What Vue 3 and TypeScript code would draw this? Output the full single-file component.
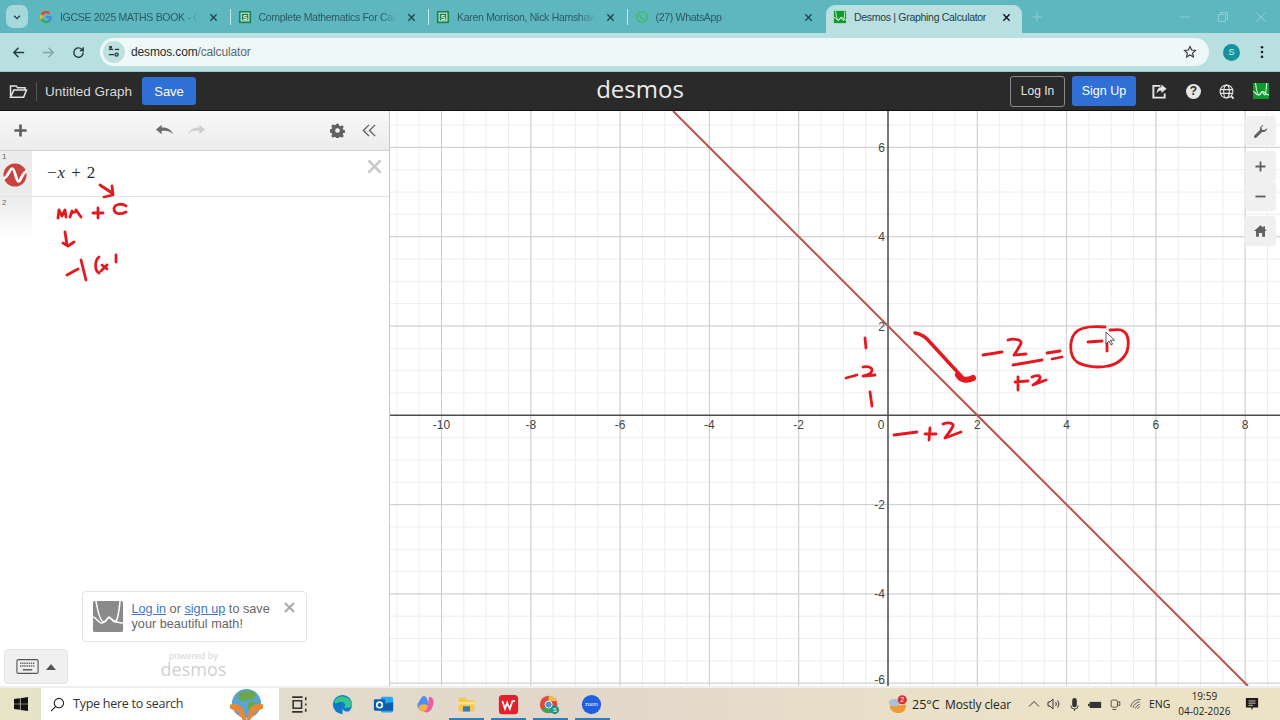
<template>
  <div class="screen">
    <div class="tabstrip">
      <button class="tabs-menu">
        <svg viewBox="0 0 12 12" width="10" height="10"><path d="M2.500 4.500 6 8l3.500-3.500" class="ico-line" /></svg>
      </button>
      <div v-for="tab in tabs" :key="tab.title" class="tab">
        <svg class="favicon" viewBox="0 0 16 16">
          <template v-if="tab.icon === 'google'">
            <path d="M14.500 8.200c0-.5 0-1-.1-1.400H8v2.700h3.700a3.200 3.200 0 0 1-1.400 2.100v1.700h2.200c1.300-1.200 2-3 2-5.100z" fill="#4285f4" />
            <path d="M8 15c1.900 0 3.400-.6 4.500-1.700l-2.200-1.700c-.6.4-1.400.7-2.300.7-1.800 0-3.300-1.200-3.800-2.800H1.900V11.200A7 7 0 0 0 8 15z" fill="#34a853" />
            <path d="M4.200 9.500a4.200 4.200 0 0 1 0-2.900V4.800H1.900a7 7 0 0 0 0 6.400z" fill="#fbbc05" />
            <path d="M8 3.800c1 0 1.900.4 2.600 1l2-2A7 7 0 0 0 1.900 4.800l2.300 1.800C4.700 5 6.200 3.800 8 3.800z" fill="#ea4335" />
          </template>
          <template v-else-if="tab.icon === 'sheet'">
            <rect x="1" y="1" width="14" height="14" rx="1" fill="#1b8453" />
            <rect x="3" y="3" width="10" height="10" fill="#d9efe3" />
            <rect x="4.200" y="4.200" width="7.600" height="7.600" fill="#1b8453" />
            <text x="8" y="11" font-size="8" font-weight="700" fill="#e8f6ee" text-anchor="middle" font-family="Liberation Sans">S</text>
          </template>
          <template v-else-if="tab.icon === 'whatsapp'">
            <circle cx="8" cy="8" r="6" fill="none" stroke="#3bbf63" stroke-width="1.800" />
            <path d="M5.500 5.500c0 3 2 5 5 5" fill="none" stroke="#3bbf63" stroke-width="1.600" />
          </template>
        </svg>
        <span class="tab-title">{{ tab.title }}</span>
        <svg class="tab-close" viewBox="0 0 10 10"><path d="M1.500 1.500l7 7m0-7l-7 7" /></svg>
      </div>
      <div class="tab tab--active">
        <svg class="favicon" viewBox="0 0 16 16">
          <rect x="1" y="1" width="14" height="14" fill="#0f9a2e" />
          <path d="M3 1.500c.8 7 2.300 10.500 3.300 10.500S8 8.500 9 8.500s1.500 3.500 3 3.500c.8 0 1-6 1.500-10.500M1 8.500c2 0 3 3 5 3s2-3 4-3 2 3 5 3" fill="none" stroke="#e9fbe8" stroke-width="1" />
        </svg>
        <span class="tab-title">Desmos | Graphing Calculator</span>
        <svg class="tab-close tab-close--dark" viewBox="0 0 10 10"><path d="M1.500 1.500l7 7m0-7l-7 7" /></svg>
      </div>
      <svg class="new-tab" viewBox="0 0 10 10"><path d="M5 .5v9M.5 5h9" /></svg>
      <div class="window-btns">
        <svg viewBox="0 0 10 10"><path d="M.5 5h9" /></svg>
        <svg viewBox="0 0 10 10"><path d="M.5 2.500h7v7h-7zM2.500 2.500V.5h7v7h-2" /></svg>
        <svg viewBox="0 0 10 10"><path d="M.5.5l9 9m0-9l-9 9" /></svg>
      </div>
    </div>

    <div class="toolbar">
      <svg class="nav" viewBox="0 0 16 16"><path d="M14 8H3m5-5L3 8l5 5" stroke="#25383a" /></svg>
      <svg class="nav" viewBox="0 0 16 16"><path d="M2 8h11M8 3l5 5-5 5" stroke="#7fa5a7" /></svg>
      <svg class="nav" viewBox="0 0 16 16"><path d="M13 8a5 5 0 1 1-1.500-3.500L13 6V2.500M13 6H9.500" stroke="#25383a" /></svg>
      <div class="omnibox">
        <span class="site-chip">
          <svg viewBox="0 0 14 14" width="12" height="12"><path d="M1 4h5M1 10h6" class="ico-line" /><circle cx="3" cy="1.500" r="1" class="ico-line" /><circle cx="10" cy="10" r="1.800" class="ico-line" /><path d="M8 4h5" class="ico-line" /></svg>
        </span>
        <span class="url">desmos.com<span class="url-path">/calculator</span></span>
        <svg class="star" viewBox="0 0 16 16"><path d="M8 1.800l1.900 4 4.300.5-3.200 3 .9 4.300L8 11.400l-3.900 2.200.9-4.300-3.200-3 4.300-.5z" /></svg>
      </div>
      <span class="avatar">S</span>
      <svg class="kebab" viewBox="0 0 4 16"><circle cx="2" cy="2.500" r="1.500" /><circle cx="2" cy="8" r="1.500" /><circle cx="2" cy="13.500" r="1.500" /></svg>
    </div>

    <header class="dcg-header">
      <div class="header-left">
        <svg class="folder" viewBox="0 0 20 16"><path d="M1.500 14V2h6l1.500 2h8v2.500H5L1.500 14h14l3-7.500H5" /></svg>
        <span class="header-sep"></span>
        <span class="graph-title">Untitled Graph</span>
        <button class="btn-blue btn-save">Save</button>
      </div>
      <div class="brand">desmos</div>
      <div class="header-right">
        <button class="btn-login">Log In</button>
        <button class="btn-blue btn-signup">Sign Up</button>
        <svg class="head-ico" viewBox="0 0 18 18"><path d="M10 3H2.500v12.500h12V11" fill="none" stroke="#e6e6e6" stroke-width="2" /><path d="M11 1.500l5.500 4.500-5.500 4.500V8C8.500 8 7 9 6 11.500 6 7 8 4.500 11 4.200z" fill="#e6e6e6" /></svg>
        <span class="help">?</span>
        <svg class="head-ico" viewBox="0 0 18 18" fill="none" stroke="#e6e6e6" stroke-width="1.200"><circle cx="9" cy="9" r="6.800" /><ellipse cx="9" cy="9" rx="3" ry="6.800" /><path d="M2.500 7h13M2.500 11h13" /><path d="M14 14l2.500 2.500" stroke-width="2" /></svg>
        <svg class="head-logo" viewBox="0 0 16 16">
          <rect x="0" y="0" width="16" height="16" fill="#0f9a2e" />
          <path d="M2.500 0c.8 7 2.300 12 3.800 12S8 8.500 9 8.500s1.500 3.500 3 3.500c.8 0 1.200-6 1.700-12M0 8.500c2 0 3 3.500 5.500 3.500S8 8.500 10 8.500s2.500 3.500 6 3.500" fill="none" stroke="#e9fbe8" stroke-width="1.100" />
        </svg>
      </div>
    </header>

    <main class="calc">
      <aside class="sidebar">
        <div class="exp-toolbar">
          <svg class="bar-ico" viewBox="0 0 16 16"><path d="M8 1.500v13M1.500 8h13" stroke="#5f5f5f" stroke-width="2.800" fill="none" /></svg>
          <div class="undo-redo">
            <svg class="bar-ico" viewBox="0 0 20 14"><path d="M1 6l6-5v3c6-.5 10 2 12 7-3-3-6-4-12-3.500V11z" fill="#6d6d6d" /></svg>
            <svg class="bar-ico" viewBox="0 0 20 14"><path d="M19 6l-6-5v3C7 3.500 3 6 1 11c3-3 6-4 12-3.500V11z" fill="#cfcfcf" /></svg>
          </div>
          <div class="bar-right">
            <svg class="bar-ico" viewBox="0 0 16 16"><path d="M6.700.8h2.600l.4 2 1.400.6 1.800-1.100 1.800 1.800-1.100 1.800.6 1.400 2 .4v2.600l-2 .4-.6 1.400 1.100 1.800-1.800 1.800-1.800-1.100-1.400.6-.4 2H6.700l-.4-2-1.400-.6-1.800 1.100-1.800-1.800 1.100-1.800-.6-1.400-2-.4V6.700l2-.4.6-1.400-1.100-1.800 1.800-1.800 1.800 1.100 1.400-.6zM8 5.500a2.500 2.500 0 1 0 0 5 2.500 2.500 0 0 0 0-5z" fill="#616161" fill-rule="evenodd" /></svg>
            <svg class="bar-ico" viewBox="0 0 16 16"><path d="M7.500 2 1.500 8l6 6M14 2 8 8l6 6" fill="none" stroke="#616161" stroke-width="1.500" /></svg>
          </div>
        </div>
        <div class="exp-row">
          <div class="gutter">
            <span class="exp-num">1</span>
            <svg class="exp-icon" viewBox="0 0 26 26">
              <circle cx="13" cy="13" r="12.500" fill="#c74440" />
              <path d="M0 17C5 17 7 6 10 6s4 14 7 14c2.500 0 4-11 9-11" fill="none" stroke="#fff" stroke-width="3" />
            </svg>
          </div>
          <div class="math"><span>−</span><i>x</i><span class="op">+</span><span>2</span></div>
          <svg class="exp-del" viewBox="0 0 16 16"><path d="M1.500 1.500l13 13m0-13l-13 13" /></svg>
        </div>
        <div class="exp-row exp-row--empty">
          <div class="gutter gutter--fade"><span class="exp-num">2</span></div>
        </div>
        <div class="side-spacer"></div>
        <div class="save-card">
          <svg class="card-logo" viewBox="0 0 30 31">
            <rect width="30" height="31" rx="1.500" fill="#8a8a8a" />
            <path d="M3 0c2 12 5 21 8 21s3-5 5-5 3 5 6 5c2 0 4-9 5-21M0 16c3 0 5 6 9 6s4-5 7-5 4 5 14 5" fill="none" stroke="#fff" stroke-width="1.500" />
          </svg>
          <div class="card-text"><a>Log in</a> or <a>sign up</a> to save your beautiful math!</div>
          <svg class="card-close" viewBox="0 0 12 12"><path d="M1 1l10 10m0-10L1 11" /></svg>
        </div>
        <div class="powered">
          <span class="powered-by">powered by</span>
          <span class="powered-logo">desmos</span>
        </div>
        <button class="keypad-btn">
          <svg viewBox="0 0 24 16" width="23" height="15"><rect x=".7" y=".7" width="22.600" height="14.600" rx="1.500" fill="none" stroke="#555" stroke-width="1.200" /><path d="M4 4.500h16M4 7.500h16" stroke="#666" stroke-width="1.600" stroke-dasharray="1.500 .8" /><path d="M7 11.500h10" stroke="#555" stroke-width="1.500" /></svg>
          <span class="caret-up"></span>
        </button>
        <!-- pen marks the teacher made on top of the list -->
        <svg class="ink ink--side" viewBox="0 0 389 575">
          <g transform="translate(0 -111)">
            <path d="M100 185l12 8M104 197l9-2-1-9M58 218l1-8 3 6 3-6 1 7M70 217l2-6M72 213l5-2M76 210l5 7M93 213h10M98 208v10M126 206c-4-3-12-2-12 3s6 6 12 3M65 232l2 13M63 243l5 3 6-4M67 275l11-6M81 260l5 20M99 257c-4 3-5 13 0 16M102 265l5 4M107 265l-6 6M116 255v7" />
          </g>
        </svg>
      </aside>

      <section class="graph">
        <svg class="graph-canvas" viewBox="390 111 890 575">
          <line v-for="x in minorX" :key="'mx' + x" :x1="x" y1="111" :x2="x" y2="686" class="grid-minor" />
          <line v-for="y in minorY" :key="'my' + y" x1="390" :y1="y" x2="1280" :y2="y" class="grid-minor" />
          <line v-for="t in xTicks" :key="'tx' + t.v" :x1="t.p" y1="111" :x2="t.p" y2="686" class="grid-major" />
          <line v-for="t in yTicks" :key="'ty' + t.v" x1="390" :y1="t.p" x2="1280" :y2="t.p" class="grid-major" />
          <line x1="888" y1="111" x2="888" y2="686" class="axis" />
          <line x1="390" y1="415.300" x2="1280" y2="415.300" class="axis" />
          <line x1="673" y1="111" x2="1248" y2="686" class="plot" />
          <text v-for="t in xTicks" :key="'lx' + t.v" :x="t.p" y="429" class="tick" text-anchor="middle">{{ t.v }}</text>
          <text v-for="t in yTicks" :key="'ly' + t.v" x="885" :y="Math.min(t.p + 4.500, 684)" class="tick" text-anchor="end">{{ t.v }}</text>
          <text x="881" y="429" class="tick" text-anchor="middle">0</text>
          <g class="ink">
            <path d="M915 333c5 1 9 3 12 6l35 38" stroke-width="3.400" />
            <path d="M865 338l1 10M846 378l11-3M863 367c4-1 9 0 9 3s-4 5-9 6l12-1M870 392l2 14" />
            <path d="M958 375c3 5 9 6 15 3" stroke-width="6" />
            <path d="M983 355l19-3M1008 340c6-2 14 0 13 3s-5 9-7 12l12-1M1013 365l29-5M1015 382l13-1M1018 377v13M1032 377c4-2 9-2 8 1s-5 6-7 7l13-5M1047 353l13-2M1052 359l10-2" />
            <path d="M1105 327c-12-1-25 0-30 6-6 8-6 23 2 29 8 5 22 6 31 4 11-2 19-10 20-19 1-8-1-15-7-17-3-1-8 0-11 0" />
            <path d="M1088 342l14-1M1107 343v8M894 435l23-3M925 434h11M930 428l-1 12M943 424c5-2 11-1 10 2s-6 9-8 12l16-6" />
          </g>
          <path d="M1106 332v12l3-3 2 4 1.500-.8-2-4h4z" fill="#fff" stroke="#333" stroke-width=".8" />
        </svg>
        <div class="graph-btns">
          <button class="gbtn">
            <svg viewBox="0 0 16 16" width="15" height="15"><path d="M15 4.500A4 4 0 0 1 9.800 8.400L3.700 14.500a1.500 1.500 0 0 1-2.200-2.200l6.100-6.100A4 4 0 0 1 11.500 1L9 3.500 9.500 6l2.500.5z" fill="#5f5f5f" /></svg>
          </button>
          <div class="gbtn-group">
            <button class="gbtn">
              <svg viewBox="0 0 12 12" width="11" height="11"><path d="M6 .5v11M.5 6h11" stroke="#5f5f5f" stroke-width="2" /></svg>
            </button>
            <button class="gbtn">
              <svg viewBox="0 0 12 12" width="11" height="11"><path d="M.5 6h11" stroke="#5f5f5f" stroke-width="2" /></svg>
            </button>
          </div>
          <button class="gbtn">
            <svg viewBox="0 0 16 14" width="13" height="12"><path d="M8 0 0 7h2.500v7H6V9.500h4V14h3.500V7H16l-2.500-2.200V1h-2v2z" fill="#5f5f5f" /></svg>
          </button>
        </div>
      </section>
    </main>

    <footer class="taskbar">
      <div class="start">
        <svg viewBox="0 0 16 16" width="14" height="14"><path d="M0 2.300 6.700 1.400v6.200H0zM7.500 1.300 16 0v7.600H7.500zM0 8.400h6.700v6.200L0 13.700zM7.500 8.400H16V16l-8.500-1.200z" fill="#111" /></svg>
      </div>
      <div class="search">
        <svg viewBox="0 0 16 16" width="15" height="15" fill="none" stroke="#222" stroke-width="1.200"><circle cx="9.500" cy="6.500" r="5" /><path d="M6 10.200 1 15" /></svg>
        <span class="search-text">Type here to search</span>
        <svg class="globe" viewBox="0 0 36 36">
          <circle cx="18" cy="17" r="15" fill="#5aa2d8" />
          <path d="M8 9c5-6 14-7 19-3 2 5-3 8-8 7-3 3-7 3-11-4zM20 16c5-2 10 0 12 3-2 5-6 8-9 9-3-4-5-7-3-12z" fill="#6aa84f" />
          <path d="M1 18c6-2 10 0 14 5l3 11-3 1-6-9-8-4zM35 18c-6-2-10 0-14 5l-3 11 3 1 6-9 8-4z" fill="#e6873a" />
        </svg>
      </div>
      <div class="task-icons">
        <svg class="task-ico" viewBox="0 0 20 20" fill="none" stroke="#333" stroke-width="1.500"><path d="M2 3h10M2 17h10M3 6.500h8v7H3zM15 3v3M15 9v2M15 14v3" /></svg>
        <svg class="task-ico" viewBox="0 0 24 24"><circle cx="12" cy="12" r="11" fill="#0f7bc7" /><path d="M2.500 9C5 1 19 0 23 11c.5 4-6 6-9 4 3-3-1-7-5-6-3 .5-5 3-6.500 0z" fill="#35c58e" /><path d="M12 14c-1 3 1 6 5 6 2 0 4-1 6-3v7H12z" fill="#e3d8cc" /></svg>
        <svg class="task-ico" viewBox="0 0 24 24"><rect x="9" y="3" width="14" height="18" rx="2" fill="#28a8ea" /><path d="M9 12l14-3v10H9z" fill="#0f5ea8" /><rect x="1" y="6" width="13" height="13" rx="1.500" fill="#0a5fb0" /><circle cx="7.500" cy="12.500" r="3.200" fill="none" stroke="#fff" stroke-width="1.800" /></svg>
        <svg class="task-ico" viewBox="0 0 24 24"><path d="M8 3c3-2 5 0 6 3l2 7c1 3-1 5-3 5H8C4 18 2 15 3 11z" fill="#4d8ff0" /><path d="M16 3c4 0 6 4 5 8-1 6-4 10-8 10-3 0-4-2-3-3 4 0 5-2 5-6z" fill="#e85fa0" /><path d="M8 12c3-1 6 0 7 2-1 4-4 6-6 6-3 0-6-3-5-5 1-2 3-3 4-3z" fill="#f6b13c" /></svg>
        <svg class="task-ico" viewBox="0 0 24 24"><path d="M3 4h8l2 3h8v13H3z" fill="#f4c84c" /><rect x="8" y="14" width="8" height="6" fill="#2f7fb8" /><rect x="3" y="9" width="18" height="3" fill="#ffe28a" /></svg>
        <svg class="task-ico" viewBox="0 0 24 24"><rect x="1" y="1" width="22" height="22" rx="4" fill="#e3202c" /><path d="M5 8l3 9 2.500-7 1.500 4M12 14l1.500 3 3-9h3" fill="none" stroke="#fff" stroke-width="2" /></svg>
        <svg class="task-ico" viewBox="0 0 24 24"><circle cx="11" cy="12" r="10" fill="#e04a3a" /><path d="M11 12 3 18a10 10 0 0 0 13 2z" fill="#3aa757" /><path d="M11 2a10 10 0 0 1 9 6H11z" fill="#f2c23c" /><circle cx="11" cy="12" r="4" fill="#4a90e2" stroke="#fff" /><circle cx="18" cy="18" r="5" fill="#1a9488" /><text x="18" y="20.500" font-size="7" fill="#fff" text-anchor="middle" font-family="Liberation Sans">S</text></svg>
        <svg class="task-ico" viewBox="0 0 24 24"><circle cx="12" cy="12" r="11" fill="#1f5fe0" /><text x="12" y="14" font-size="6" fill="#fff" text-anchor="middle" font-family="Liberation Sans">zoom</text></svg>
      </div>
      <div class="running">
        <span v-for="n in 4" :key="n" class="run-mark"></span>
      </div>
      <div class="tray">
        <svg class="weather" viewBox="0 0 22 22">
          <path d="M3 12c3 0 13 0 17-1 0 6-3 9-8 9s-9-3-9-8z" fill="#f09a36" />
          <ellipse cx="8" cy="9" rx="6" ry="4" fill="#a9bfdc" />
          <circle cx="16" cy="6" r="4.800" fill="#d9302c" />
          <text x="16" y="8.600" font-size="7.500" fill="#fff" text-anchor="middle" font-family="Liberation Sans">2</text>
        </svg>
        <span class="temp">25°C</span>
        <span class="sky">Mostly clear</span>
        <svg class="tray-ico tray-chev" viewBox="0 0 12 12"><path d="M1 8.500 6 3.500l5 5" /></svg>
        <svg class="tray-ico tray-vol" viewBox="0 0 14 14"><path d="M1 5v4h2l3 3V2L3 5zM8.500 5c1 1 1 3 0 4M10.500 3.500c1.800 2 1.800 5 0 7" /></svg>
        <svg class="tray-ico tray-mic" viewBox="0 0 12 16"><rect x="3.500" y="1" width="5" height="10" rx="2.500" fill="#333" stroke="none" /><path d="M2 9a4 4 0 0 0 8 0M6 13v2" /></svg>
        <svg class="tray-ico tray-bat" viewBox="0 0 16 12"><rect x="2" y="3" width="13" height="7" fill="#333" stroke="none" /><path d="M0 5h2v3H0z" fill="#333" stroke="none" /></svg>
        <svg class="tray-ico tray-cam" viewBox="0 0 14 16"><rect x="1.500" y="3" width="8" height="9" rx="1.500" /><path d="M9.500 6l3-1v5l-3-1M3 15h5" /></svg>
        <svg class="tray-ico tray-wifi" viewBox="0 0 16 16"><path d="M1 12C2 6 7 2 14 2M4 13c1-4 4-7 9-8M7 14c.5-2 3-5 6-5.500M10 14.500c.5-1.500 1.500-2.500 3-3" /></svg>
        <span class="lang">ENG</span>
        <div class="clock"><span>19:59</span><span>04-02-2026</span></div>
        <svg class="tray-note" viewBox="0 0 16 16"><path d="M1 1h14v11H9l-1 3-1-3H1z" fill="#1d1d1d" /><path d="M4 4.500h8M4 7h8M4 9.500h5" stroke="#e8dcc8" /></svg>
      </div>
    </footer>
  </div>
</template>

<script setup lang="ts">
import { computed } from "vue";

// titles as far as the strip shows them
const tabs = [
  { title: "IGCSE 2025 MATHS BOOK - Go", icon: "google" },
  { title: "Complete Mathematics For Can", icon: "sheet" },
  { title: "Karen Morrison, Nick Hamshaw", icon: "sheet" },
  { title: "(27) WhatsApp", icon: "whatsapp" },
];

const originX = 888;
const originY = 415.3;
const unit = 44.65;

function range(from: number, to: number, step: number) {
  const out: number[] = [];
  for (let v = from; v <= to; v += step) out.push(v);
  return out;
}

const xTicks = computed(() =>
  range(-10, 8, 2)
    .filter((v) => v !== 0)
    .map((v) => ({ v: String(v), p: originX + v * unit })),
);
const yTicks = computed(() =>
  range(-6, 6, 2)
    .filter((v) => v !== 0)
    .map((v) => ({ v: String(v), p: originY - v * unit })),
);
const minorX = computed(() =>
  range(-11, 9, 0.5).map((v) => originX + v * unit),
);
const minorY = computed(() => range(-6.5, 7, 0.5).map((v) => originY - v * unit));
</script>

<style scoped>
.screen {
  width: 1280px;
  height: 720px;
  display: flex;
  flex-direction: column;
  overflow: hidden;
  font-family: "Liberation Sans", Arial, sans-serif;
  background: #fff;
}

button {
  font-family: inherit;
  border: none;
  cursor: pointer;
}

.ico-line {
  fill: none;
  stroke: #22393c;
  stroke-width: 1.500;
}

/* browser tabs */
.tabstrip {
  height: 33px;
  flex: none;
  display: flex;
  align-items: flex-end;
  background: #5eb6be;
  padding-left: 6px;
}

.tabs-menu {
  width: 22px;
  height: 23px;
  margin-bottom: 5px;
  margin-right: 4px;
  padding: 0;
  border-radius: 7px;
  background: #a5d8da;
  display: flex;
  align-items: center;
  justify-content: center;
}

.tab {
  width: 198.500px;
  height: 28px;
  flex: none;
  box-sizing: border-box;
  display: flex;
  align-items: center;
  padding: 0 13px 4px 7px;
  position: relative;
  color: #2a5a62;
  font-size: 10.500px;
  letter-spacing: -0.3px;
}

.tab + .tab::before {
  content: "";
  position: absolute;
  left: -1px;
  top: 4px;
  height: 16px;
  width: 1px;
  background: #c3e6e6;
}

.favicon {
  width: 14px;
  height: 14px;
  margin-right: 7px;
  flex: none;
}

.tab-title {
  flex: 1;
  min-width: 0;
  white-space: nowrap;
  overflow: hidden;
  -webkit-mask-image: linear-gradient(to right, #000 88%, transparent);
  mask-image: linear-gradient(to right, #000 88%, transparent);
}

.tab-close {
  width: 9px;
  height: 9px;
  flex: none;
  margin-left: 10px;
  fill: none;
  stroke: #23454b;
  stroke-width: 1.500;
}

.tab-close--dark {
  stroke: #111;
}

.tab--active {
  width: 196px;
  background: #b8e0e1;
  border-radius: 9px 9px 0 0;
  color: #1f3f45;
  padding-right: 11px;
}

.tab--active::before {
  display: none;
}

.tab--active .tab-title {
  -webkit-mask-image: none;
  mask-image: none;
}

.new-tab {
  width: 10px;
  height: 10px;
  margin: 0 0 11px 10px;
  fill: none;
  stroke: #86c8cc;
  stroke-width: 1.300;
}

.window-btns {
  margin-left: auto;
  display: flex;
  gap: 28px;
  padding-right: 14px;
  margin-bottom: 11px;
}

.window-btns svg {
  width: 10px;
  height: 10px;
  fill: none;
  stroke: #8fcfd2;
  stroke-width: 1;
}

/* address bar */
.toolbar {
  height: 39px;
  flex: none;
  display: flex;
  align-items: center;
  background: #b8e0e1;
  padding-left: 11px;
  box-sizing: border-box;
  border-bottom: 1px solid #9fc8c9;
}

.nav {
  width: 15px;
  height: 15px;
  margin-right: 15px;
  flex: none;
  fill: none;
  stroke-width: 1.500;
}

.nav:nth-of-type(3) {
  margin-right: 14px;
}

.omnibox {
  width: 1109px;
  height: 28px;
  flex: none;
  box-sizing: border-box;
  border-radius: 14px;
  background: #eef8f7;
  display: flex;
  align-items: center;
  padding: 0 12px 0 3px;
}

.site-chip {
  width: 22px;
  height: 22px;
  border-radius: 50%;
  background: #bfe0e1;
  display: flex;
  align-items: center;
  justify-content: center;
  margin-right: 6px;
}

.url {
  font-size: 12px;
  letter-spacing: -0.15px;
  color: #1f2d2f;
}

.url-path {
  color: #5b6a6c;
}

.star {
  margin-left: auto;
  width: 14px;
  height: 14px;
  fill: none;
  stroke: #333;
  stroke-width: 1.300;
}

.avatar {
  width: 17px;
  height: 17px;
  margin-left: 14px;
  border-radius: 50%;
  background: #14919b;
  color: #d8f3f3;
  font-size: 9px;
  display: flex;
  align-items: center;
  justify-content: center;
  flex: none;
}

.kebab {
  width: 4px;
  height: 14px;
  margin-left: 20px;
  fill: #222;
  flex: none;
}

/* desmos header */
.dcg-header {
  height: 39px;
  flex: none;
  display: flex;
  align-items: center;
  background: #2a2a2a;
  position: relative;
  border-bottom: 1px solid #111;
  box-sizing: border-box;
}

.header-left {
  display: flex;
  align-items: center;
  padding-left: 9px;
}

.folder {
  width: 19px;
  height: 15px;
  fill: none;
  stroke: #e2e2e2;
  stroke-width: 1.600;
}

.header-sep {
  width: 1px;
  height: 19px;
  margin: 0 8px 0 8px;
  background: #555;
}

.graph-title {
  font-size: 13.500px;
  color: #d9d9d9;
  margin-right: 10px;
}

.btn-blue {
  background: #2f6fd6;
  color: #fff;
  border-radius: 3px;
  font-size: 13px;
  height: 28px;
  padding: 0;
}

.btn-save {
  width: 54px;
}

.brand {
  position: absolute;
  left: 0;
  right: 0;
  top: -1px;
  text-align: center;
  font-family: "Open Sans", sans-serif;
  font-weight: 400;
  font-size: 24px;
  line-height: 36px;
  color: #ececec;
  pointer-events: none;
}

.header-right {
  margin-left: auto;
  display: flex;
  align-items: center;
  padding-right: 11px;
}

.btn-login {
  width: 55px;
  height: 31px;
  box-sizing: border-box;
  background: transparent;
  border: 1px solid #8a8a8a;
  border-radius: 3px;
  color: #e6e6e6;
  font-size: 12px;
}

.btn-signup {
  width: 64px;
  height: 30px;
  margin-left: 7px;
  margin-right: 15px;
  font-size: 12.500px;
}

.head-ico {
  width: 17px;
  height: 17px;
  flex: none;
}

.help {
  width: 15px;
  height: 15px;
  margin: 0 17px 0 18px;
  border-radius: 50%;
  background: #e6e6e6;
  color: #2a2a2a;
  font-size: 12px;
  font-weight: 700;
  display: flex;
  align-items: center;
  justify-content: center;
  flex: none;
}

.head-logo {
  width: 16px;
  height: 16px;
  margin-left: 18px;
  flex: none;
}

/* calculator body */
.calc {
  flex: 1;
  min-height: 0;
  display: flex;
}

.sidebar {
  width: 390px;
  flex: none;
  box-sizing: border-box;
  border-right: 1px solid #c8c8c8;
  display: flex;
  flex-direction: column;
  position: relative;
  background: #fff;
}

.exp-toolbar {
  height: 40px;
  flex: none;
  box-sizing: border-box;
  display: flex;
  align-items: center;
  padding: 0 12px 0 13px;
  background: linear-gradient(#f8f8f8, #ececec);
  border-bottom: 1px solid #d0d0d0;
  position: relative;
}

.bar-ico {
  width: 15px;
  height: 15px;
  flex: none;
}

.undo-redo {
  position: absolute;
  left: 155px;
  display: flex;
  gap: 13px;
}

.undo-redo .bar-ico {
  width: 19px;
}

.bar-right {
  margin-left: auto;
  display: flex;
  gap: 17px;
}

.exp-row {
  height: 45px;
  flex: none;
  display: flex;
  position: relative;
  border-bottom: 1px solid #e4e4e4;
}

.exp-row--empty {
  height: 44px;
  border-bottom: none;
}

.gutter {
  width: 32px;
  flex: none;
  background: #ececec;
  position: relative;
}

.gutter--fade {
  background: linear-gradient(#ececec, #fff);
}

.exp-num {
  position: absolute;
  left: 2px;
  top: 1px;
  font-size: 8px;
  color: #666;
}

.exp-icon {
  position: absolute;
  left: 3px;
  top: 12px;
  width: 24px;
  height: 24px;
}

.math {
  margin: 13px 0 0 15px;
  font-family: "Liberation Serif", serif;
  font-size: 17px;
  color: #2a2a2a;
  display: flex;
  height: 18px;
  line-height: 18px;
}

.math i {
  margin-left: 1px;
}

.op {
  margin: 0 6px;
}

.exp-del {
  position: absolute;
  right: 7px;
  top: 8px;
  width: 15px;
  height: 15px;
  fill: none;
  stroke: #c8c8c8;
  stroke-width: 2.800;
}

.side-spacer {
  flex: 1;
}

.save-card {
  width: 225px;
  height: 51px;
  flex: none;
  box-sizing: border-box;
  align-self: center;
  margin-right: 1px;
  border: 1px solid #e2e2e2;
  border-radius: 4px;
  background: #fff;
  display: flex;
  align-items: center;
  padding: 0 10px;
  position: relative;
}

.card-logo {
  width: 30px;
  height: 31px;
  flex: none;
  margin-right: 9px;
}

.card-text {
  width: 145px;
  font-size: 12.700px;
  line-height: 14.500px;
  color: #666;
}

.card-text a {
  color: #3d77c4;
  text-decoration: underline;
}

.card-close {
  position: absolute;
  right: 11px;
  top: 10px;
  width: 11px;
  height: 11px;
  fill: none;
  stroke: #a8a8a8;
  stroke-width: 2.200;
}

.powered {
  height: 44px;
  flex: none;
  display: flex;
  flex-direction: column;
  align-items: center;
  padding-top: 9px;
  box-sizing: border-box;
  margin-right: 2px;
}

.powered-by {
  font-size: 9.500px;
  line-height: 10px;
  color: #d4d4d4;
}

.powered-logo {
  font-family: "Open Sans", sans-serif;
  font-size: 18px;
  line-height: 16px;
  color: #d0d0d0;
}

.keypad-btn {
  position: absolute;
  left: 4px;
  bottom: 2px;
  width: 64px;
  height: 35px;
  padding: 0;
  border-radius: 4px;
  background: #f0f0f0;
  border: 1px solid #e3e3e3;
  display: flex;
  align-items: center;
  justify-content: center;
  gap: 7px;
}

.caret-up {
  width: 0;
  height: 0;
  border-left: 5px solid transparent;
  border-right: 5px solid transparent;
  border-bottom: 6px solid #555;
}

.ink {
  fill: none;
  stroke: #e5181f;
  stroke-width: 2.800;
  stroke-linecap: round;
  stroke-linejoin: round;
}

.ink--side {
  position: absolute;
  left: 0;
  top: 0;
  width: 389px;
  height: 575px;
  pointer-events: none;
}

.graph {
  flex: 1;
  min-width: 0;
  position: relative;
  background: #fff;
}

.graph-canvas {
  display: block;
  width: 100%;
  height: 100%;
}

.grid-minor {
  stroke: #ededed;
  stroke-width: 1;
}

.grid-major {
  stroke: #cdcdcd;
  stroke-width: 1;
}

.axis {
  stroke: #4d4d4d;
  stroke-width: 1.500;
}

.plot {
  stroke: #b9544c;
  stroke-width: 2;
}

.tick {
  font-size: 12px;
  fill: #444;
}

.graph-btns {
  position: absolute;
  top: 5px;
  right: 4px;
  display: flex;
  flex-direction: column;
  gap: 5px;
}

.gbtn-group {
  display: flex;
  flex-direction: column;
}

.gbtn {
  width: 31px;
  height: 30px;
  padding: 0;
  background: #f0f0f0;
  border-radius: 4px;
  display: flex;
  align-items: center;
  justify-content: center;
}

/* windows taskbar */
.taskbar {
  height: 34px;
  flex: none;
  display: flex;
  align-items: center;
  position: relative;
  background: linear-gradient(to right, #e6e4c6 0, #e3dccb 22%, #e2d6cb 45%, #e9e0c8 70%, #ece3c6 100%);
  border-top: 2px solid #efefef;
  box-sizing: border-box;
}

.start {
  width: 41px;
  display: flex;
  justify-content: center;
  flex: none;
}

.search {
  width: 238px;
  height: 32px;
  flex: none;
  box-sizing: border-box;
  background: #fff;
  display: flex;
  align-items: center;
  padding-left: 9px;
  position: relative;
}

.search-text {
  margin: 0 0 1px 8px;
  font-size: 12.500px;
  letter-spacing: -0.25px;
  color: #333;
  font-family: "Open Sans", sans-serif;
}

.globe {
  position: absolute;
  left: 188px;
  top: -1px;
  width: 35px;
  height: 35px;
}

.task-icons {
  display: flex;
  align-items: center;
  gap: 20.500px;
  margin-left: 11px;
}

.task-ico {
  width: 21px;
  height: 21px;
  flex: none;
}

.running {
  position: absolute;
  left: 449px;
  bottom: 0;
  display: flex;
  gap: 7px;
}

.run-mark {
  width: 35px;
  height: 2px;
  background: #2a7fc0;
}

.tray {
  position: absolute;
  left: 887px;
  top: 0;
  bottom: 0;
  right: 0;
  display: flex;
  align-items: center;
  font-family: "Open Sans", sans-serif;
  color: #222;
}

.weather {
  width: 21px;
  height: 21px;
  flex: none;
}

.temp {
  font-size: 12.500px;
  margin-left: 4px;
  width: 33px;
  white-space: nowrap;
}

.sky {
  font-size: 12px;
  letter-spacing: -0.1px;
  white-space: nowrap;
  width: 66px;
}

.tray-ico {
  flex: none;
  fill: none;
  stroke: #333;
  stroke-width: 1;
}

.tray-chev {
  width: 12px;
  height: 12px;
  margin-left: 17px;
}

.tray-vol {
  width: 14px;
  height: 14px;
  margin-left: 7px;
}

.tray-mic {
  width: 11px;
  height: 15px;
  margin-left: 8px;
}

.tray-bat {
  width: 14px;
  height: 11px;
  margin-left: 8px;
}

.tray-cam {
  width: 11px;
  height: 14px;
  margin-left: 8px;
}

.tray-wifi {
  width: 12px;
  height: 12px;
  margin-left: 9px;
}

.lang {
  font-size: 10.500px;
  margin-left: 7px;
}

.clock {
  width: 60px;
  margin-left: 4px;
  display: flex;
  flex-direction: column;
  align-items: center;
  font-size: 10px;
  line-height: 15px;
}

.tray-note {
  width: 14px;
  height: 14px;
  margin-left: 11px;
  flex: none;
}
</style>

<style>
html,
body {
  margin: 0;
  overflow: hidden;
}
</style>
